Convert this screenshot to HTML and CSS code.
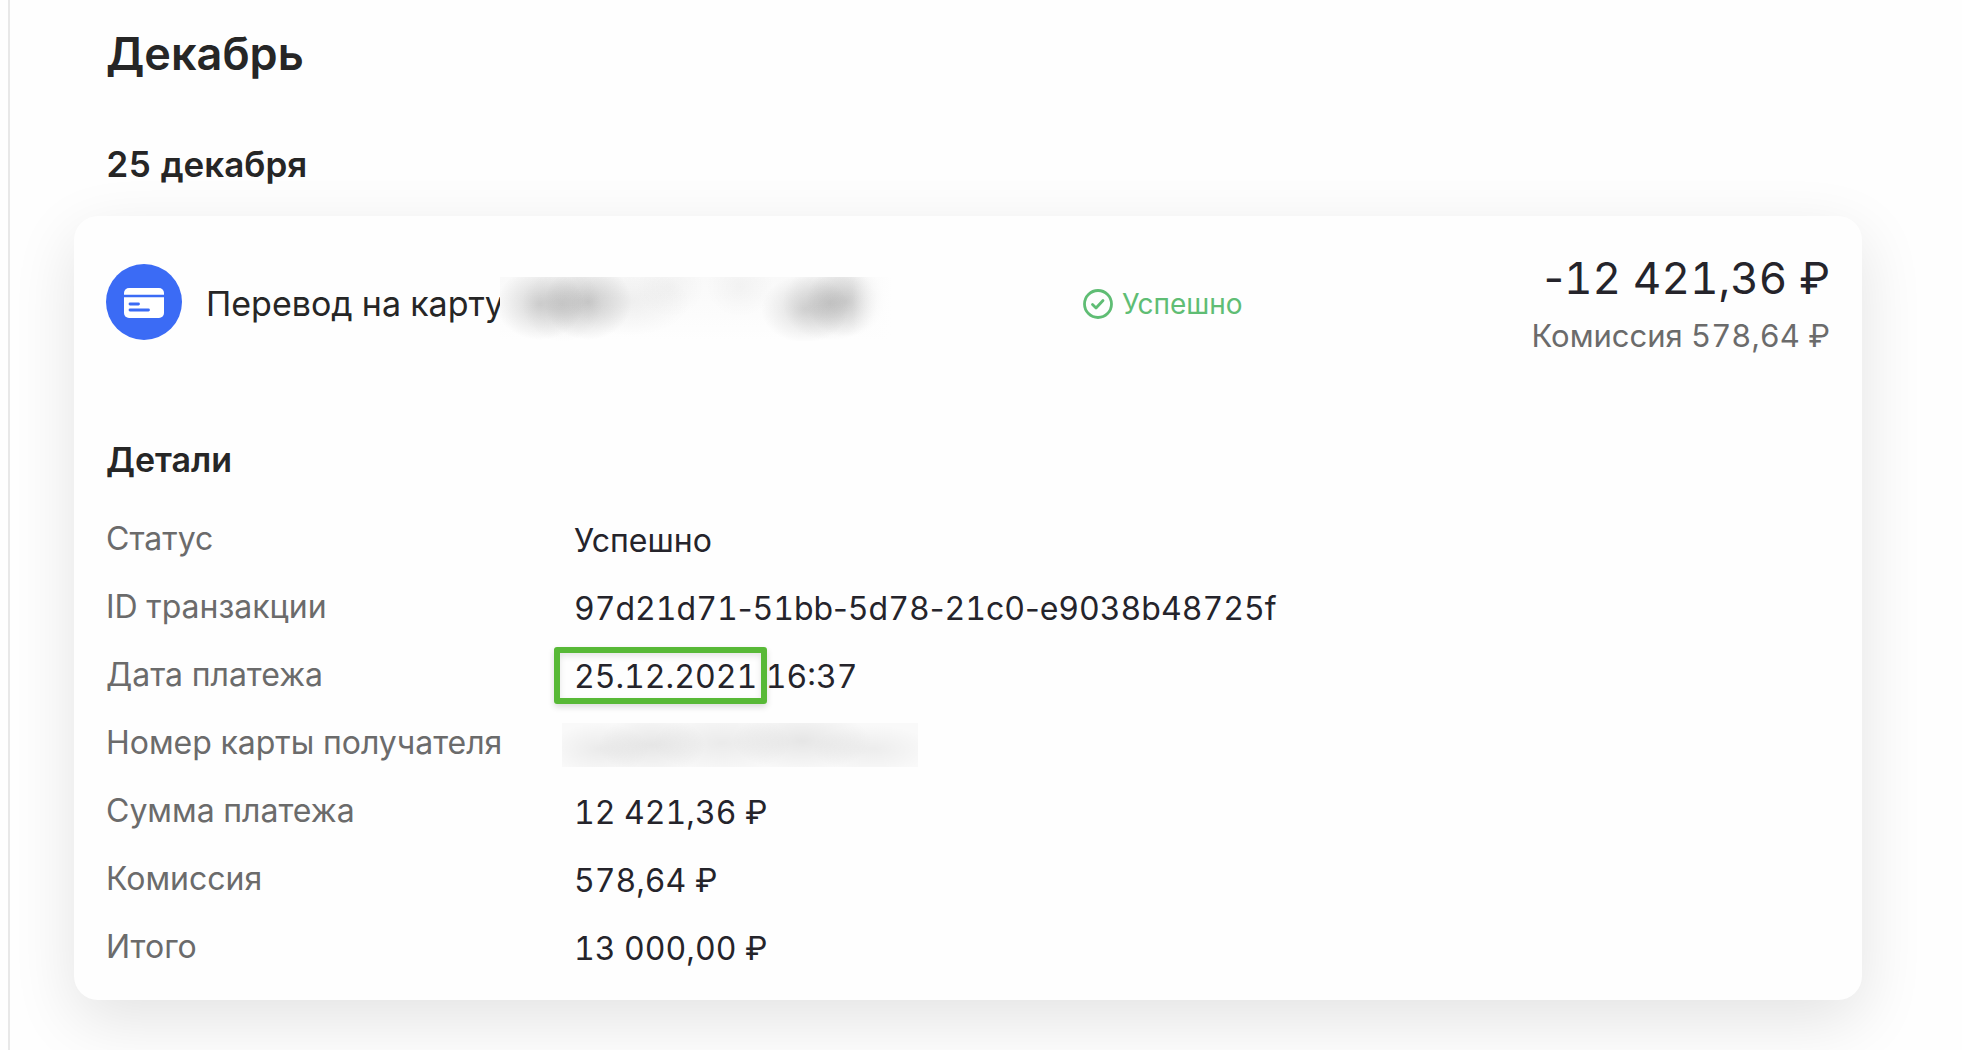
FILE: index.html
```html
<!DOCTYPE html>
<html lang="ru">
<head>
<meta charset="utf-8">
<meta name="viewport" content="width=device-width, initial-scale=1">
<title>История операций</title>
<link rel="stylesheet" href="styles.css">
</head>
<body>
<main class="history">
  <h1 class="month">Декабрь</h1>
  <h2 class="day">25 декабря</h2>
  <article class="card">
    <header class="summary">
      <div class="operation">
        <svg class="operation-icon" viewBox="0 0 76 76" aria-hidden="true">
          <circle cx="38" cy="38" r="38" fill="#3b6bf5"/>
          <rect x="18" y="24" width="40" height="30" rx="5" fill="#fff"/>
          <path d="M18 32h40" stroke="#3b6bf5" stroke-width="2.4"/>
          <path d="M24 40h8.500M24 46h18.500" stroke="#3b6bf5" stroke-width="2.800" stroke-linecap="round"/>
        </svg>
        <h3 class="operation-title">Перевод на карту</h3>
        <span class="mask mask-title"></span>
      </div>
      <div class="result">
        <div class="status">
          <svg class="status-icon" viewBox="0 0 32 32" fill="none" stroke="#5fbd74" aria-hidden="true">
            <circle cx="16" cy="16" r="13.500" stroke-width="2.800"/>
            <path d="M10.500 16.500l3.500 3.500 7-7.500" stroke-width="2.800" stroke-linecap="round" stroke-linejoin="round"/>
          </svg>
          <span>Успешно</span>
        </div>
        <div class="sum">
          <div class="amount"><span class="dash">-</span>12 421,36 ₽</div>
          <div class="fee">Комиссия 578,64 ₽</div>
        </div>
      </div>
    </header>
    <h3 class="details-title">Детали</h3>
    <dl class="details">
      <dt>Статус</dt><dd>Успешно</dd>
      <dt>ID транзакции</dt><dd>97d21d71<span class="dash">-</span>51bb<span class="dash">-</span>5d78<span class="dash">-</span>21c0<span class="dash">-</span>e9038b48725f</dd>
      <dt>Дата платежа</dt><dd><span class="marked">25.12.2021</span> 16:37</dd>
      <dt>Номер карты получателя</dt><dd><span class="mask mask-number"></span></dd>
      <dt>Сумма платежа</dt><dd>12 421,36 ₽</dd>
      <dt>Комиссия</dt><dd>578,64 ₽</dd>
      <dt>Итого</dt><dd>13 000,00 ₽</dd>
    </dl>
  </article>
</main>
</body>
</html>
```

FILE: styles.css
```css
* {
  box-sizing: border-box;
}

body {
  margin: 0 0 0 8px;
  background: #fefefe;
  color: #262626;
  font-family: Inter, "Liberation Sans", sans-serif;
  font-size: 32px;
  font-variant-numeric: tabular-nums;
  line-height: 40px;
}

h1, h2, h3, dl, dd {
  margin: 0;
}

.history {
  min-height: 100vh;
  padding: 24px 100px 50px 64px;
  border-left: 2px solid #e8e8e8;
}

.month {
  padding-left: 32px;
  font-size: 45px;
  font-weight: 600;
  line-height: 60px;
}

.day {
  margin-top: 60px;
  padding-left: 32px;
  font-size: 35px;
  font-weight: 600;
}

.card {
  margin-top: 32px;
  padding: 32px 32px 18px;
  border-radius: 24px;
  background: #fefefe;
  box-shadow: 0 20px 64px rgba(0, 0, 0, 0.11);
}

.summary {
  display: grid;
  grid-template-columns: 976fr 748fr;
  height: 176px;
}

.operation {
  display: flex;
  align-items: center;
  height: 108px;
}

.operation-icon {
  flex: none;
  width: 76px;
  height: 76px;
  margin-right: 24px;
}

.operation-title {
  flex: none;
  padding-top: 4px;
  font-size: 34px;
  font-weight: 400;
}

.result {
  display: flex;
  justify-content: space-between;
}

.status {
  display: flex;
  align-items: center;
  gap: 8px;
  height: 112px;
  color: #5fbd74;
  font-size: 28px;
}

.status-icon {
  width: 32px;
  height: 32px;
}

.sum {
  text-align: right;
  white-space: nowrap;
}

.amount {
  color: #25242b;
  font-size: 44px;
  line-height: 60px;
}

.fee {
  margin-top: 8px;
  color: #6b6b6b;
  font-size: 31px;
}

.dash {
  font-variant-numeric: normal;
}

.details-title {
  margin-top: 16px;
  font-size: 34px;
  font-weight: 600;
}

.details {
  display: grid;
  grid-template-columns: 468px 1fr;
  grid-auto-rows: 68px;
  align-items: center;
  margin-top: 26px;
}

.details dt {
  padding-bottom: 2px;
  color: #6b6b6b;
}

.details dd {
  padding-top: 2px;
  color: #25242b;
}

.marked {
  position: relative;
}

.marked::before {
  content: "";
  position: absolute;
  inset: -10px -10px -8px -20px;
  border: 6px solid #58b937;
  border-radius: 3px;
  box-shadow: 0 3px 6px rgba(0, 0, 0, 0.14), inset 0 3px 6px rgba(0, 0, 0, 0.1);
}

.mask {
  display: block;
}

.mask-title {
  width: 392px;
  height: 64px;
  margin: 14px 0 0 -4px;
  background:
    linear-gradient(90deg, transparent 90%, #fefefe),
    radial-gradient(ellipse 44px 36px at 40px 27px, rgba(0, 0, 0, 0.16), transparent),
    radial-gradient(ellipse 40px 38px at 62px 27px, rgba(0, 0, 0, 0.08), transparent),
    radial-gradient(ellipse 44px 38px at 88px 25px, rgba(0, 0, 0, 0.18), transparent),
    radial-gradient(ellipse 60px 34px at 130px 25px, rgba(0, 0, 0, 0.05), transparent),
    radial-gradient(ellipse 34px 30px at 170px 10px, rgba(0, 0, 0, 0.03), transparent),
    radial-gradient(ellipse 34px 30px at 240px 10px, rgba(0, 0, 0, 0.03), transparent),
    radial-gradient(ellipse 44px 34px at 305px 32px, rgba(0, 0, 0, 0.13), transparent),
    radial-gradient(ellipse 48px 38px at 330px 26px, rgba(0, 0, 0, 0.12), transparent),
    radial-gradient(ellipse 40px 36px at 346px 24px, rgba(0, 0, 0, 0.13), transparent),
    linear-gradient(#f9f9f9, #fefefe);
}

.mask-number {
  width: 356px;
  height: 44px;
  margin-left: -12px;
  background:
    radial-gradient(ellipse 50px 26px at 38px 26px, rgba(0, 0, 0, 0.06), transparent),
    radial-gradient(ellipse 54px 30px at 90px 22px, rgba(0, 0, 0, 0.08), transparent),
    radial-gradient(ellipse 70px 30px at 160px 20px, rgba(0, 0, 0, 0.06), transparent),
    radial-gradient(ellipse 70px 30px at 240px 18px, rgba(0, 0, 0, 0.08), transparent),
    radial-gradient(ellipse 60px 24px at 310px 26px, rgba(0, 0, 0, 0.05), transparent),
    #f9f9f9;
}
```
